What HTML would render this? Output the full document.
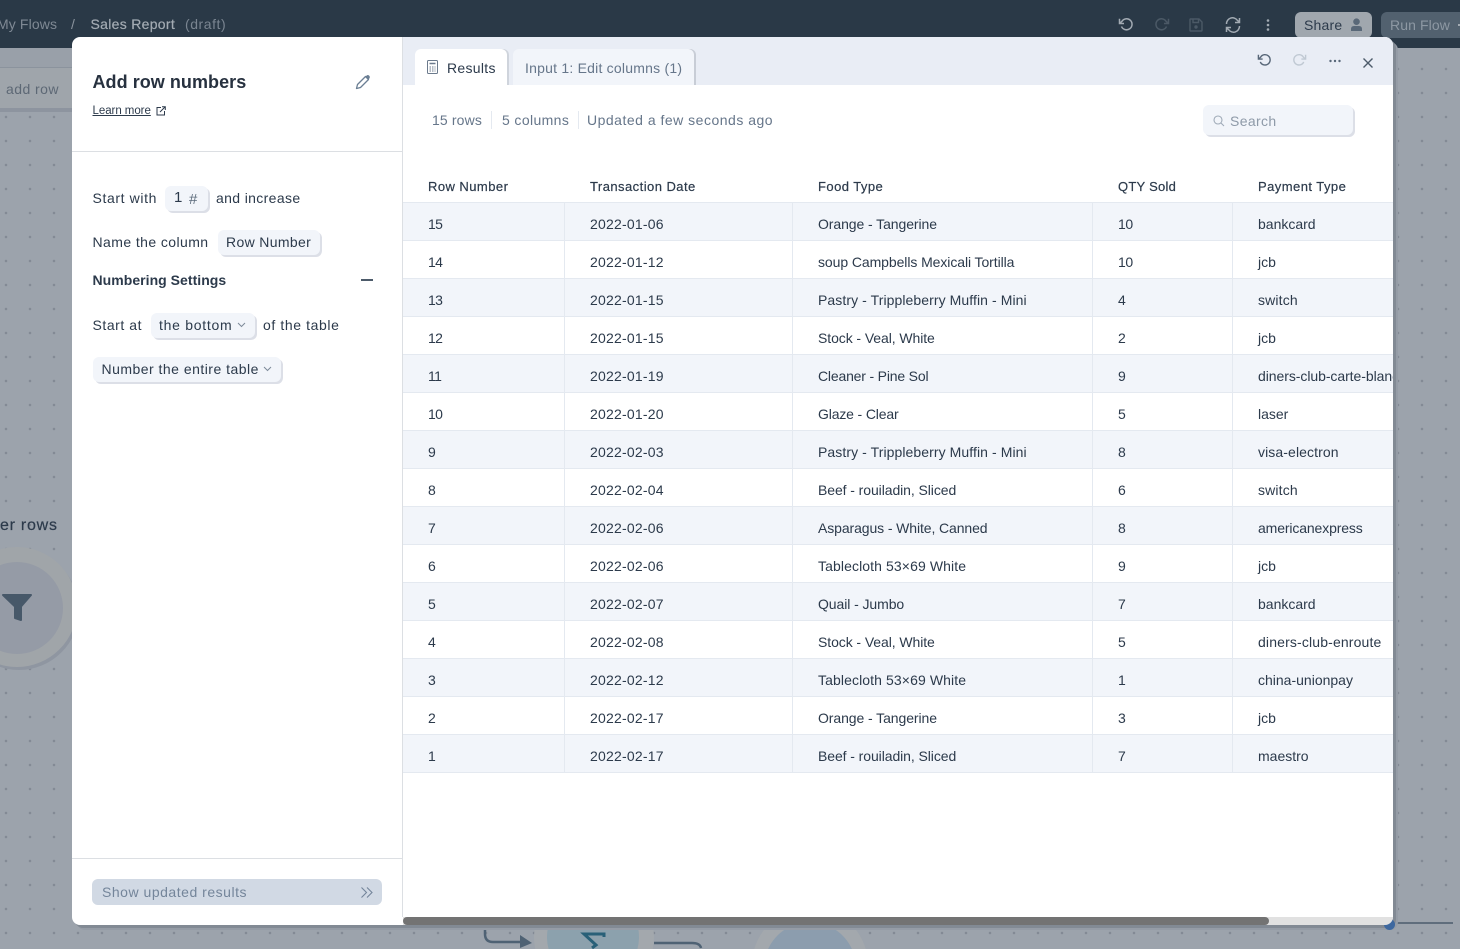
<!DOCTYPE html>
<html lang="en"><head><meta charset="utf-8"><title>Add row numbers</title>
<style>
*{box-sizing:border-box}
html,body{margin:0;padding:0;width:1460px;height:949px;overflow:hidden}
body{position:relative;background:#9ca3ac;font-family:"Liberation Sans",Arial,sans-serif;color:#2c3a4b;font-size:14px}
.a{position:absolute;white-space:nowrap;line-height:20px}
svg{position:absolute;overflow:visible}
.dots{position:absolute;left:0;top:48px;width:1460px;height:901px;background-image:radial-gradient(circle at 6px 21px,#838a95 1.1px,transparent 1.5px);background-size:24px 24px;background-position:0 -48px}
.top{position:absolute;left:0;top:0;width:1460px;height:48px;background:#2a3947}
.modal{position:absolute;left:72px;top:37px;width:1321px;height:888px;background:#fff;border-radius:8px;box-shadow:3px 3px 0 #828a94,5px 5px 0 #959ca6}
.side{position:absolute;left:403px;top:37px;width:990px;height:48px;background:#e9edf5;border-radius:0 8px 0 0}
.chip{position:absolute;background:#f2f5fa;border-radius:6px;box-shadow:2px 2px 0 #dcdfe7;height:25px}
.t{letter-spacing:.42px;color:#2c3a4b}
.tab{position:absolute;top:49px;height:36px;border-radius:6px 6px 0 0}
.row{position:absolute;left:403px;width:990px;height:38px;border-bottom:1px solid #e4e9f0;overflow:hidden}
.row.o{background:#f2f5fa}
.row span{position:absolute;top:11px;line-height:20px;font-size:14px;color:#2c3a4b;white-space:nowrap}
.c1{left:25px;letter-spacing:-.6px}.c2{left:187px;letter-spacing:.22px}.c3{left:415px;letter-spacing:-.08px}.c4{left:715px;letter-spacing:-.4px}.c5{left:855px}
.row i{position:absolute;top:0;width:1px;height:38px;background:#e4e9f0}
.h{position:absolute;top:177px;font-size:13px;letter-spacing:.45px;color:#2c3a4b;line-height:20px;white-space:nowrap;-webkit-text-stroke:.2px #2c3a4b}
</style></head><body>
<div class="dots"></div>

<!-- background canvas -->
<div class="a" style="left:0;top:48px;width:72px;height:20px;background:#99a0a9"></div>
<div class="a" style="left:0;top:67px;width:72px;height:1px;background:#8b939d"></div>
<div class="a" style="left:0;top:68px;width:72px;height:40px;background:#9fa5ab"></div>
<div class="a" style="left:0;top:108px;width:72px;height:4px;background:#8d949f"></div>
<div class="a" style="left:6px;top:79px;color:#5d6875;letter-spacing:.45px">add row</div>
<div class="a" style="left:0;top:516px;font-size:16px;color:#2c3a4b;letter-spacing:.75px;-webkit-text-stroke:.2px #2c3a4b">er rows</div>
<svg style="left:0;top:540px;overflow:hidden" width="72" height="135" viewBox="0 540 72 135"><circle cx="19" cy="610" r="60" fill="#8f96a1"/><circle cx="17" cy="607" r="60" fill="#a0a5a9"/><circle cx="17" cy="608" r="46" fill="#959ba6"/><path d="M3 595H31L21 606.500V620L15 618V606.500Z" fill="#475869" stroke="#475869" stroke-width="2" stroke-linejoin="round"/></svg>

<svg style="left:480px;top:905px;overflow:hidden" width="400" height="44" viewBox="480 905 400 44"><path d="M535.200 949A60 60 0 1 1 652.800 949Z" fill="#a3a8ad"/><path d="M548.600 949A46 46 0 1 1 637.400 949Z" fill="#8ca1ad"/><path d="M754.300 949A58 58 0 0 1 865.700 949Z" fill="#a3a8ad"/><path d="M768.100 949A46 46 0 0 1 851.900 949Z" fill="#8c9dae"/><path d="M485 925V934Q485 942 493 942H522" fill="none" stroke="#4f6274" stroke-width="2.500"/><path d="M520 935L532 943L520 948Z" fill="#4f6274"/><path d="M654 943H692Q700 943 701 948" fill="none" stroke="#4f6274" stroke-width="2.500"/><path d="M604 937V934H584L596 945L592 948" fill="none" stroke="#286078" stroke-width="3"/></svg>
<div class="a" style="left:1393px;top:922px;width:60px;height:2px;background:#5f6d7c"></div>

<!-- top bar -->
<div class="top"></div>
<div class="a" style="left:-3px;top:14px;color:#7f8994;letter-spacing:.12px">My Flows</div>
<div class="a" style="left:71px;top:14px;color:#8b949e">/</div>
<div class="a" style="left:90.500px;top:14px;color:#a3abb3;letter-spacing:.3px;-webkit-text-stroke:.2px #a3abb3">Sales Report</div>
<div class="a" style="left:185px;top:14px;color:#7a8591;letter-spacing:.55px">(draft)</div>
<svg style="left:1118px;top:17px" width="16" height="16" viewBox="0 0 16 16" fill="none" stroke="#a3abb3" stroke-width="1.500"><path d="M3.500 9.500A5.500 5.500 0 1 0 3.800 4.500L1.500 6.500"/><path d="M1.500 1.800V6.500H6"/></svg>
<svg style="left:1154px;top:17px" width="16" height="16" viewBox="0 0 16 16" fill="none" stroke="#4b5966" stroke-width="1.500"><path d="M12.500 9.500A5.500 5.500 0 1 1 12.200 4.500L14.500 6.500"/><path d="M14.500 1.800V6.500H10"/></svg>
<svg style="left:1189px;top:18px" width="14" height="14" viewBox="0 0 14 14" fill="none" stroke="#4b5966" stroke-width="1.400"><path d="M1.500 1H10L13 4V12.500Q13 13 12.500 13H1.500Q1 13 1 12.500V1.500Q1 1 1.500 1Z"/><path d="M4 1V4.500H9.500V1"/><circle cx="7" cy="9" r="1" fill="#4b5966"/></svg>
<svg style="left:1225px;top:17px" width="16" height="16" viewBox="0 0 16 16" fill="none" stroke="#a3abb3" stroke-width="1.500"><path d="M1.500 7A6 6 0 0 1 12.500 3.500L14.500 5"/><path d="M14.500 1V5.500H10"/><path d="M14.500 9A6 6 0 0 1 3.500 12.500L1.500 11"/><path d="M1.500 15V10.500H6"/></svg>
<svg style="left:1266px;top:18px" width="4" height="14" viewBox="0 0 4 14" fill="#a3abb3"><circle cx="2" cy="2.500" r="1.300"/><circle cx="2" cy="7" r="1.300"/><circle cx="2" cy="11.500" r="1.300"/></svg>
<div class="a" style="left:1295px;top:12px;width:77px;height:26px;background:#a0a7ae;border-radius:6px"></div>
<div class="a" style="left:1304px;top:15px;color:#2c3a4b;letter-spacing:.2px">Share</div>
<svg style="left:1350px;top:18px" width="13" height="14" viewBox="0 0 13 14" fill="#596878"><circle cx="6.500" cy="3.700" r="3.300"/><path d="M1 13V11Q1 8 4 8H9Q12 8 12 11V13Z"/></svg>
<div class="a" style="left:1381px;top:12px;width:79px;height:26px;background:#52616f;border-radius:6px 0 0 6px"></div>
<div class="a" style="left:1390px;top:15px;color:#8d98a3;letter-spacing:.1px">Run Flow</div>
<div class="a" style="left:1458px;top:24px;width:2px;height:2px;background:#a3abb3"></div>

<!-- modal -->
<div class="modal"></div>
<div class="a" style="left:1384px;top:919px;width:11px;height:11px;border-radius:50%;background:#3e689f"></div>
<div class="side"></div>
<div class="a" style="left:402px;top:37px;width:1px;height:880px;background:#dcdfe3"></div>

<!-- left panel -->
<div class="a" style="left:92.500px;top:71px;font-size:18px;font-weight:bold;letter-spacing:.05px;line-height:22px;color:#27313f">Add row numbers</div>
<svg style="left:355px;top:74px" width="16" height="16" viewBox="0 0 16 16" fill="none"><path d="M1.500 14.500L2.500 10.500L10.500 2.500L13.500 5.500L5.500 13.500Z" stroke="#6b7f94" stroke-width="1.300" stroke-linejoin="round"/><path d="M10.500 2.500L12 1.200Q13 .7 14 1.500L14.600 2.200Q15.200 3 14.500 4.200L13.500 5.500Z" fill="#6b7f94"/></svg>
<div class="a" style="left:92.500px;top:101px;font-size:11.500px;letter-spacing:-.05px;text-decoration:underline;color:#2c3a4b">Learn more</div>
<svg style="left:156px;top:106px" width="10" height="10" viewBox="0 0 10 10" fill="none" stroke="#2c3a4b" stroke-width="1"><path d="M5 1.500H1V9H8.500V5"/><path d="M4 6L9 1M6 .7H9.300V4"/></svg>
<div class="a" style="left:72px;top:151px;width:331px;height:1px;background:#dcdfe3"></div>

<div class="a t" style="left:92.500px;top:188px;letter-spacing:.62px">Start with</div>
<div class="chip" style="left:165px;top:186px;width:43px"></div>
<div class="a t" style="left:174px;top:188px;font-size:15px">1</div>
<div class="a" style="left:189px;top:190px;color:#5c6b7b;font-size:15px">#</div>
<div class="a t" style="left:216px;top:188px;letter-spacing:.36px">and increase</div>

<div class="a t" style="left:92.500px;top:232px">Name the column</div>
<div class="chip" style="left:218px;top:230px;width:102px"></div>
<div class="a t" style="left:226px;top:232px;letter-spacing:.34px">Row Number</div>

<div class="a" style="left:92.500px;top:270px;letter-spacing:.04px;font-weight:bold;color:#2c3a4b">Numbering Settings</div>
<div class="a" style="left:361px;top:279px;width:12px;height:2px;background:#4d5b6a"></div>

<div class="a t" style="left:92.500px;top:315px;letter-spacing:.55px">Start at</div>
<div class="chip" style="left:151px;top:313px;width:104px"></div>
<div class="a t" style="left:159px;top:315px;letter-spacing:.72px">the bottom</div>
<svg style="left:237px;top:322px" width="9" height="6" viewBox="0 0 9 6" fill="none" stroke="#7d8a99" stroke-width="1"><path d="M1 1L4.500 4.500L8 1"/></svg>
<div class="a t" style="left:263px;top:315px;letter-spacing:.6px">of the table</div>

<div class="chip" style="left:93px;top:357px;width:188px"></div>
<div class="a t" style="left:101.500px;top:359px;letter-spacing:.48px">Number the entire table</div>
<svg style="left:263px;top:366px" width="9" height="6" viewBox="0 0 9 6" fill="none" stroke="#7d8a99" stroke-width="1"><path d="M1 1L4.500 4.500L8 1"/></svg>

<div class="a" style="left:72px;top:858px;width:331px;height:1px;background:#dcdfe3"></div>
<div class="a" style="left:92px;top:879px;width:290px;height:26px;background:#d1d9e4;border-radius:6px"></div>
<div class="a" style="left:102px;top:882px;color:#74859a;letter-spacing:.52px">Show updated results</div>
<svg style="left:360px;top:886px" width="13" height="13" viewBox="0 0 13 13" fill="none" stroke="#74859a" stroke-width="1.100"><path d="M1.500 1.500L6.500 6.500L1.500 11.500M7 1.500L12 6.500L7 11.500"/></svg>

<!-- tabs -->
<div class="tab" style="left:415px;width:92px;background:#fff;box-shadow:2px 0 0 #cfd4dc"></div>
<div class="tab" style="left:513px;width:181px;background:#f2f5fa;box-shadow:2px 0 0 #c8cdd6"></div>
<svg style="left:427px;top:60px" width="11" height="14" viewBox="0 0 11 14" fill="none" stroke="#6b7a8c" stroke-width="1"><rect x=".5" y=".5" width="10" height="13" rx="1"/><path d="M2.500 3.500H8.500" stroke-width="1.500"/><path d="M2.500 7H8.500M2.500 9H8.500M2.500 11H8.500" stroke-dasharray="1.500 1"/></svg>
<div class="a t" style="left:447px;top:58px;letter-spacing:.3px">Results</div>
<div class="a" style="left:525px;top:58px;color:#66768a;letter-spacing:.22px">Input 1: Edit columns (1)</div>

<svg style="left:1257px;top:53px" width="15" height="15" viewBox="0 0 16 16" fill="none" stroke="#586778" stroke-width="1.500"><path d="M3.500 9.500A5.500 5.500 0 1 0 3.800 4.500L1.500 6.500"/><path d="M1.500 1.800V6.500H6"/></svg>
<svg style="left:1292px;top:53px" width="15" height="15" viewBox="0 0 16 16" fill="none" stroke="#c0c9d3" stroke-width="1.500"><path d="M12.500 9.500A5.500 5.500 0 1 1 12.200 4.500L14.500 6.500"/><path d="M14.500 1.800V6.500H10"/></svg>
<svg style="left:1329px;top:59px" width="12" height="4" viewBox="0 0 12 4" fill="#586778"><circle cx="1.500" cy="2" r="1.200"/><circle cx="6" cy="2" r="1.200"/><circle cx="10.500" cy="2" r="1.200"/></svg>
<svg style="left:1363px;top:58px" width="10" height="10" viewBox="0 0 10 10" fill="none" stroke="#4d5b6a" stroke-width="1.400"><path d="M.5 .5L9.500 9.500M9.500 .5L.5 9.500"/></svg>

<!-- stats -->
<div class="a" style="left:432px;top:110px;color:#66768a;letter-spacing:.14px">15 rows</div>
<div class="a" style="left:491px;top:111px;width:1px;height:18px;background:#e4e9f0"></div>
<div class="a" style="left:502px;top:110px;color:#66768a;letter-spacing:.38px">5 columns</div>
<div class="a" style="left:578px;top:111px;width:1px;height:18px;background:#e4e9f0"></div>
<div class="a" style="left:587px;top:110px;color:#66768a;letter-spacing:.5px">Updated a few seconds ago</div>

<div class="chip" style="left:1203px;top:105px;width:150px;height:30px;box-shadow:2px 2px 0 #dcdfe7"></div>
<svg style="left:1213px;top:115px" width="12" height="12" viewBox="0 0 12 12" fill="none" stroke="#a0abb8" stroke-width="1.100"><circle cx="5" cy="5" r="4"/><path d="M8 8L11 11"/></svg>
<div class="a" style="left:1230px;top:111px;color:#8e9aa8;letter-spacing:.35px">Search</div>

<!-- table -->
<div class="a" style="left:403px;top:202px;width:990px;height:1px;background:#e4e9f0"></div>
<div class="h" style="left:428px">Row Number</div>
<div class="h" style="left:590px">Transaction Date</div>
<div class="h" style="left:818px">Food Type</div>
<div class="h" style="left:1118px;letter-spacing:.25px">QTY Sold</div>
<div class="h" style="left:1258px">Payment Type</div>

<div class="row o" style="top:203px"><i style="left:161px"></i><i style="left:389px"></i><i style="left:689px"></i><i style="left:829px"></i><span class="c1">15</span><span class="c2">2022-01-06</span><span class="c3">Orange - Tangerine</span><span class="c4">10</span><span class="c5">bankcard</span></div>
<div class="row" style="top:241px"><i style="left:161px"></i><i style="left:389px"></i><i style="left:689px"></i><i style="left:829px"></i><span class="c1">14</span><span class="c2">2022-01-12</span><span class="c3">soup Campbells Mexicali Tortilla</span><span class="c4">10</span><span class="c5">jcb</span></div>
<div class="row o" style="top:279px"><i style="left:161px"></i><i style="left:389px"></i><i style="left:689px"></i><i style="left:829px"></i><span class="c1">13</span><span class="c2">2022-01-15</span><span class="c3" style="letter-spacing:.08px">Pastry - Trippleberry Muffin - Mini</span><span class="c4">4</span><span class="c5" style="letter-spacing:.15px">switch</span></div>
<div class="row" style="top:317px"><i style="left:161px"></i><i style="left:389px"></i><i style="left:689px"></i><i style="left:829px"></i><span class="c1">12</span><span class="c2">2022-01-15</span><span class="c3">Stock - Veal, White</span><span class="c4">2</span><span class="c5">jcb</span></div>
<div class="row o" style="top:355px"><i style="left:161px"></i><i style="left:389px"></i><i style="left:689px"></i><i style="left:829px"></i><span class="c1">11</span><span class="c2">2022-01-19</span><span class="c3" style="letter-spacing:-.18px">Cleaner - Pine Sol</span><span class="c4">9</span><span class="c5" style="letter-spacing:-.06px">diners-club-carte-blanche</span></div>
<div class="row" style="top:393px"><i style="left:161px"></i><i style="left:389px"></i><i style="left:689px"></i><i style="left:829px"></i><span class="c1">10</span><span class="c2">2022-01-20</span><span class="c3" style="letter-spacing:-.15px">Glaze - Clear</span><span class="c4">5</span><span class="c5">laser</span></div>
<div class="row o" style="top:431px"><i style="left:161px"></i><i style="left:389px"></i><i style="left:689px"></i><i style="left:829px"></i><span class="c1">9</span><span class="c2">2022-02-03</span><span class="c3" style="letter-spacing:.08px">Pastry - Trippleberry Muffin - Mini</span><span class="c4">8</span><span class="c5" style="letter-spacing:.1px">visa-electron</span></div>
<div class="row" style="top:469px"><i style="left:161px"></i><i style="left:389px"></i><i style="left:689px"></i><i style="left:829px"></i><span class="c1">8</span><span class="c2">2022-02-04</span><span class="c3">Beef - rouiladin, Sliced</span><span class="c4">6</span><span class="c5" style="letter-spacing:.15px">switch</span></div>
<div class="row o" style="top:507px"><i style="left:161px"></i><i style="left:389px"></i><i style="left:689px"></i><i style="left:829px"></i><span class="c1">7</span><span class="c2">2022-02-06</span><span class="c3" style="letter-spacing:-.1px">Asparagus - White, Canned</span><span class="c4">8</span><span class="c5" style="letter-spacing:-.13px">americanexpress</span></div>
<div class="row" style="top:545px"><i style="left:161px"></i><i style="left:389px"></i><i style="left:689px"></i><i style="left:829px"></i><span class="c1">6</span><span class="c2">2022-02-06</span><span class="c3" style="letter-spacing:.1px">Tablecloth 53×69 White</span><span class="c4">9</span><span class="c5">jcb</span></div>
<div class="row o" style="top:583px"><i style="left:161px"></i><i style="left:389px"></i><i style="left:689px"></i><i style="left:829px"></i><span class="c1">5</span><span class="c2">2022-02-07</span><span class="c3">Quail - Jumbo</span><span class="c4">7</span><span class="c5">bankcard</span></div>
<div class="row" style="top:621px"><i style="left:161px"></i><i style="left:389px"></i><i style="left:689px"></i><i style="left:829px"></i><span class="c1">4</span><span class="c2">2022-02-08</span><span class="c3">Stock - Veal, White</span><span class="c4">5</span><span class="c5" style="letter-spacing:.15px">diners-club-enroute</span></div>
<div class="row o" style="top:659px"><i style="left:161px"></i><i style="left:389px"></i><i style="left:689px"></i><i style="left:829px"></i><span class="c1">3</span><span class="c2">2022-02-12</span><span class="c3" style="letter-spacing:.1px">Tablecloth 53×69 White</span><span class="c4">1</span><span class="c5">china-unionpay</span></div>
<div class="row" style="top:697px"><i style="left:161px"></i><i style="left:389px"></i><i style="left:689px"></i><i style="left:829px"></i><span class="c1">2</span><span class="c2">2022-02-17</span><span class="c3">Orange - Tangerine</span><span class="c4">3</span><span class="c5">jcb</span></div>
<div class="row o" style="top:735px"><i style="left:161px"></i><i style="left:389px"></i><i style="left:689px"></i><i style="left:829px"></i><span class="c1">1</span><span class="c2">2022-02-17</span><span class="c3">Beef - rouiladin, Sliced</span><span class="c4">7</span><span class="c5">maestro</span></div>

<!-- scrollbar -->
<div class="a" style="left:403px;top:917px;width:990px;height:8px;background:#e1e1e1;border-radius:0 0 8px 0"></div>
<div class="a" style="left:403px;top:917px;width:866px;height:8px;background:#737373;border-radius:4px"></div>
</body></html>
